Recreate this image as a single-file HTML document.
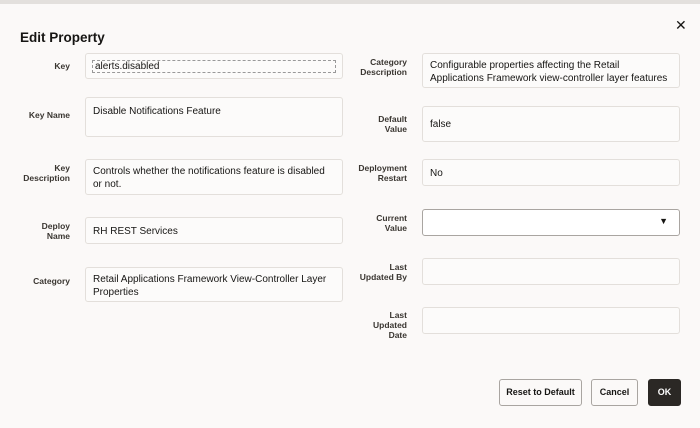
<!DOCTYPE html><html><head><style>
body{margin:0;width:700px;height:428px;background:#fbf9f8;font-family:"Liberation Sans",sans-serif;position:relative;overflow:hidden}
.top{position:absolute;left:0;top:0;width:700px;height:4px;background:#e3e0dd}
h1{position:absolute;left:20px;top:30px;margin:0;font-size:13.5px;font-weight:bold;color:#161513}
.x{position:absolute;left:675px;top:17px;font-size:14px;color:#161513}
.l{position:absolute;font-size:8.5px;font-weight:bold;color:#3a3631;text-align:right;line-height:10px}
.f{position:absolute;box-sizing:border-box;border:1px solid #e3dfdb;background:#fcfbfa;border-radius:3px;font-size:10px;color:#161513;padding:7px 7px;line-height:13px}
.b{position:absolute;box-sizing:border-box;border:1px solid #a9a5a1;border-radius:3px;background:#fbf9f8;font-size:9px;font-weight:bold;color:#161513;text-align:center;line-height:24px;top:379px;height:27px}
</style></head><body>
<div class="top"></div>
<h1>Edit Property</h1><div class="x">✕</div>
<div class="l" style="right:630px;top:61px">Key</div>
<div class="f" style="left:85px;top:53px;width:258px;height:26px;padding:6px 6px"><div style="border:1px dashed #999;line-height:11px;padding:0 2px">alerts.disabled</div></div>
<div class="l" style="right:630px;top:110px">Key Name</div>
<div class="f" style="left:85px;top:97px;width:258px;height:40px">Disable Notifications Feature</div>
<div class="l" style="right:630px;top:163px">Key<br>Description</div>
<div class="f" style="left:85px;top:159px;width:258px;height:36px;padding:5px 7px">Controls whether the notifications feature is disabled or not.</div>
<div class="l" style="right:630px;top:221px">Deploy<br>Name</div>
<div class="f" style="left:85px;top:217px;width:258px;height:27px;padding:7px 7px">RH REST Services</div>
<div class="l" style="right:630px;top:276px">Category</div>
<div class="f" style="left:85px;top:267px;width:258px;height:35px;padding:5px 7px">Retail Applications Framework View-Controller Layer Properties</div>

<div class="l" style="right:293px;top:57px">Category<br>Description</div>
<div class="f" style="left:422px;top:53px;width:258px;height:35px;padding:5px 7px">Configurable properties affecting the Retail Applications Framework view-controller layer features</div>
<div class="l" style="right:293px;top:114px">Default<br>Value</div>
<div class="f" style="left:422px;top:106px;width:258px;height:36px;padding:11px 7px">false</div>
<div class="l" style="right:293px;top:163px">Deployment<br>Restart</div>
<div class="f" style="left:422px;top:159px;width:258px;height:27px;padding:7px 7px">No</div>
<div class="l" style="right:293px;top:213px">Current<br>Value</div>
<div class="f" style="left:422px;top:209px;width:258px;height:27px;background:#fff;border-color:#a9a5a1"><span style="position:absolute;right:11px;top:5px;font-size:9px">▼</span></div>
<div class="l" style="right:293px;top:262px">Last<br>Updated By</div>
<div class="f" style="left:422px;top:258px;width:258px;height:27px"></div>
<div class="l" style="right:293px;top:310px">Last<br>Updated<br>Date</div>
<div class="f" style="left:422px;top:307px;width:258px;height:27px"></div>

<div class="b" style="left:499px;width:83px">Reset to Default</div>
<div class="b" style="left:591px;width:47px">Cancel</div>
<div class="b" style="left:648px;width:33px;background:#2b2825;border-color:#2b2825;color:#fff">OK</div>
</body></html>
